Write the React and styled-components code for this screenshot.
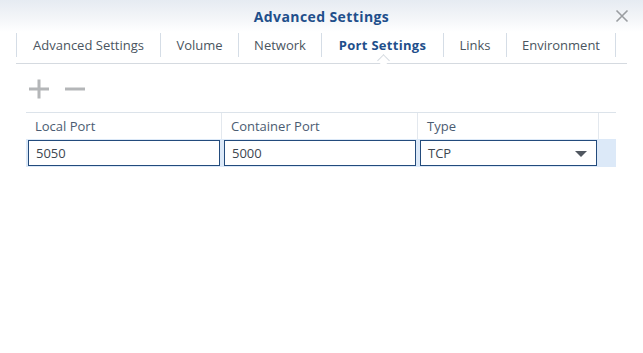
import React from 'react';
import styled, { createGlobalStyle } from 'styled-components';

const GlobalStyle = createGlobalStyle`
  html, body {
    margin: 0;
    padding: 0;
    background: #fff;
  }
  body {
    font-family: "Open Sans", "Liberation Sans", sans-serif;
    font-size: 13px;
    color: #414b55;
  }
`;

const Window = styled.div`
  width: 643px;
  height: 353px;
  background: #fff;
  overflow: hidden;
`;

const TitleBar = styled.div`
  position: relative;
  height: 32px;
  display: flex;
  align-items: center;
  justify-content: center;
  background: linear-gradient(to bottom, #e6ebf2 0%, #f3f5f8 55%, #ffffff 100%);
`;

const Title = styled.div`
  font-weight: 700;
  font-size: 14px;
  letter-spacing: 0.4px;
  color: #1f4f8b;
`;

const CloseButton = styled.button`
  position: absolute;
  right: 14px;
  top: 9px;
  width: 14px;
  height: 14px;
  padding: 0;
  border: 0;
  background: none;
  display: flex;
`;

const TabBar = styled.div`
  margin: 0 16px;
  height: 32px;
  display: flex;
  align-items: flex-start;
  padding-top: 1px;
  box-sizing: border-box;
  border-bottom: 1px solid #d5dae0;
`;

const Tab = styled.div`
  position: relative;
  height: 24px;
  display: flex;
  align-items: center;
  justify-content: center;
  width: ${p => p.$w}px;
  box-sizing: border-box;
  border-right: 1px solid #d5dde6;
  border-left: ${p => (p.$first ? '1px solid #d5dde6' : '0')};
  color: ${p => (p.$active ? '#1f4f8b' : '#4a5560')};
  font-weight: ${p => (p.$active ? 700 : 400)};
  letter-spacing: ${p => (p.$active ? '0.3px' : '0')};
  white-space: nowrap;

  ${p => p.$active && `
    &::after {
      content: '';
      position: absolute;
      left: 50%;
      bottom: -8px;
      width: 8px;
      height: 8px;
      margin-left: -4px;
      background: #fff;
      border-left: 1px solid #d5dae0;
      border-top: 1px solid #d5dae0;
      transform: rotate(45deg);
    }
  `}
`;

const Toolbar = styled.div`
  height: 48px;
  display: flex;
  align-items: center;
  gap: 14px;
  padding-left: 28px;
  padding-top: 2px;
  box-sizing: border-box;
`;

const ToolIcon = styled.button`
  width: 22px;
  height: 22px;
  padding: 0;
  border: 0;
  background: none;
  display: flex;
`;

const Grid = styled.div`
  margin-left: 26px;
  width: 590px;
  border-top: 1px solid #dce3ea;
`;

const Row = styled.div`
  display: grid;
  grid-template-columns: 196px 196px 181px 17px;
  height: ${p => p.$h}px;
  background: ${p => (p.$selected ? '#dce9f8' : '#fff')};
`;

const HeadCell = styled.div`
  display: flex;
  align-items: center;
  padding-left: 9px;
  border-right: ${p => (p.$last ? '0' : '1px solid #e3e8ee')};
  color: #4b5c72;
`;

const Cell = styled.div`
  padding: 1px 2px;
  display: flex;
`;

const Field = styled.div`
  flex: 1;
  box-sizing: border-box;
  border: 1px solid #234b7c;
  background: #fff;
  display: flex;
  align-items: center;
  justify-content: space-between;
  padding: 0 9px 0 7px;
  color: #3d4650;
`;

const Caret = styled.span`
  width: 0;
  height: 0;
  border-left: 6px solid transparent;
  border-right: 6px solid transparent;
  border-top: 6px solid #505760;
  margin-top: 2px;
`;

const tabs = [
  { label: 'Advanced Settings', w: 145 },
  { label: 'Volume', w: 78 },
  { label: 'Network', w: 83 },
  { label: 'Port Settings', w: 122, active: true },
  { label: 'Links', w: 63 },
  { label: 'Environment', w: 109 },
];

export default function App() {
  return (
    <Window>
      <GlobalStyle />
      <TitleBar>
        <Title>Advanced Settings</Title>
        <CloseButton aria-label="Close">
          <svg width="14" height="14" viewBox="0 0 14 14">
            <path d="M1.5 1.5 L12.5 12.5 M12.5 1.5 L1.5 12.5" stroke="#9a9da1" strokeWidth="1.6" />
          </svg>
        </CloseButton>
      </TitleBar>
      <TabBar>
        {tabs.map((t, i) => (
          <Tab key={t.label} $w={t.w} $first={i === 0} $active={t.active}>
            {t.label}
          </Tab>
        ))}
      </TabBar>
      <Toolbar>
        <ToolIcon aria-label="Add">
          <svg width="22" height="22" viewBox="0 0 22 22">
            <path d="M1 11 H21 M11 1.5 V20.5" stroke="#b4b6b8" strokeWidth="3" />
          </svg>
        </ToolIcon>
        <ToolIcon aria-label="Remove">
          <svg width="22" height="22" viewBox="0 0 22 22">
            <path d="M1 11 H21" stroke="#b4b6b8" strokeWidth="3" />
          </svg>
        </ToolIcon>
      </Toolbar>
      <Grid>
        <Row $h={26}>
          <HeadCell>Local Port</HeadCell>
          <HeadCell>Container Port</HeadCell>
          <HeadCell>Type</HeadCell>
          <HeadCell $last />
        </Row>
        <Row $h={28} $selected>
          <Cell><Field>5050</Field></Cell>
          <Cell><Field>5000</Field></Cell>
          <Cell><Field>TCP<Caret /></Field></Cell>
          <div />
        </Row>
      </Grid>
    </Window>
  );
}
